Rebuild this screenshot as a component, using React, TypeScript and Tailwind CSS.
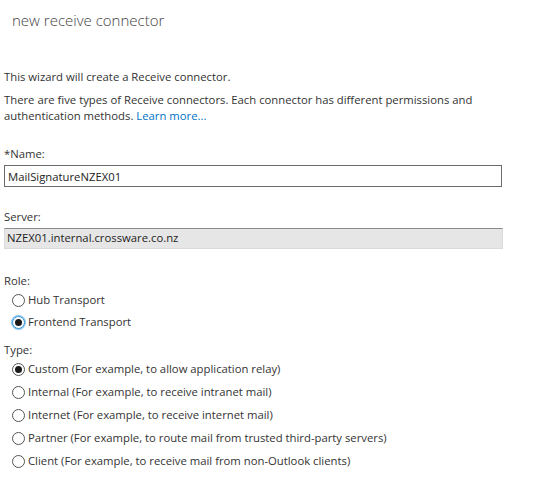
import { useState } from "react";

type Option = { value: string; label: string };

const roles: Option[] = [
  { value: "hub", label: "Hub Transport" },
  { value: "frontend", label: "Frontend Transport" },
];

const types: Option[] = [
  { value: "custom", label: "Custom (For example, to allow application relay)" },
  { value: "internal", label: "Internal (For example, to receive intranet mail)" },
  { value: "internet", label: "Internet (For example, to receive internet mail)" },
  { value: "partner", label: "Partner (For example, to route mail from trusted third-party servers)" },
  { value: "client", label: "Client (For example, to receive mail from non-Outlook clients)" },
];

function Radio({
  checked,
  focused,
  tall,
  label,
  onClick,
}: {
  checked: boolean;
  focused?: boolean;
  tall?: boolean;
  label: string;
  onClick: () => void;
}) {
  return (
    <button
      type="button"
      onClick={onClick}
      className={"flex items-center gap-[3px] pl-2 text-left " + (tall ? "h-[23px]" : "h-[22px]")}
    >
      <span
        className={
          "grid h-[13px] w-[13px] place-items-center rounded-full border " +
          (focused ? "border-[#2a8dd4] ring-1 ring-[#8cc4ec]" : "border-[#555]")
        }
      >
        {checked ? <span className="h-[7px] w-[7px] rounded-full bg-[#1a1a1a]" /> : null}
      </span>
      <span>{label}</span>
    </button>
  );
}

export default function App() {
  const [name, setName] = useState("MailSignatureNZEX01");
  const [role, setRole] = useState("frontend");
  const [type, setType] = useState("custom");

  return (
    <div className="h-[494px] w-[553px] bg-white font-['Open_Sans',sans-serif] text-[11.3px] text-[#333]">
      <h1 className="pl-3 pt-[7px] text-[15px] font-light leading-[26px] text-[#444]">new receive connector</h1>

      <div className="px-1 pt-[35px]">
        <p className="leading-[18px]">This wizard will create a Receive connector.</p>
        <p className="mt-[6px] w-[480px] leading-[16px]">
          There are five types of Receive connectors. Each connector has different permissions and authentication
          methods. <span className="cursor-pointer text-[#0072c6]">Learn more...</span>
        </p>

        <label className="mt-[22px] block leading-[16px]">*Name:</label>
        <input
          value={name}
          onChange={(e) => setName(e.target.value)}
          className="mt-[3px] block h-[22px] w-[498px] border border-[#6b6b6b] px-[3px] text-[#222] outline-none"
        />

        <label className="mt-[22px] block leading-[16px]">Server:</label>
        <div className="mt-[3px] flex h-[21px] w-[499px] items-center border border-[#dadada] border-t-[#8a8a8a] bg-[#e6e6e6] px-[2px] text-[#222]">
          NZEX01.internal.crossware.co.nz
        </div>

        <div className="mt-[24px] leading-[16px]">Role:</div>
        <div className="flex flex-col">
          {roles.map((r) => (
            <Radio
              key={r.value}
              label={r.label}
              checked={role === r.value}
              focused={r.value === "frontend"}
              onClick={() => setRole(r.value)}
            />
          ))}
        </div>

        <div className="mt-[9px] leading-[16px]">Type:</div>
        <div className="flex flex-col">
          {types.map((t) => (
            <Radio key={t.value} tall label={t.label} checked={type === t.value} onClick={() => setType(t.value)} />
          ))}
        </div>
      </div>
    </div>
  );
}
